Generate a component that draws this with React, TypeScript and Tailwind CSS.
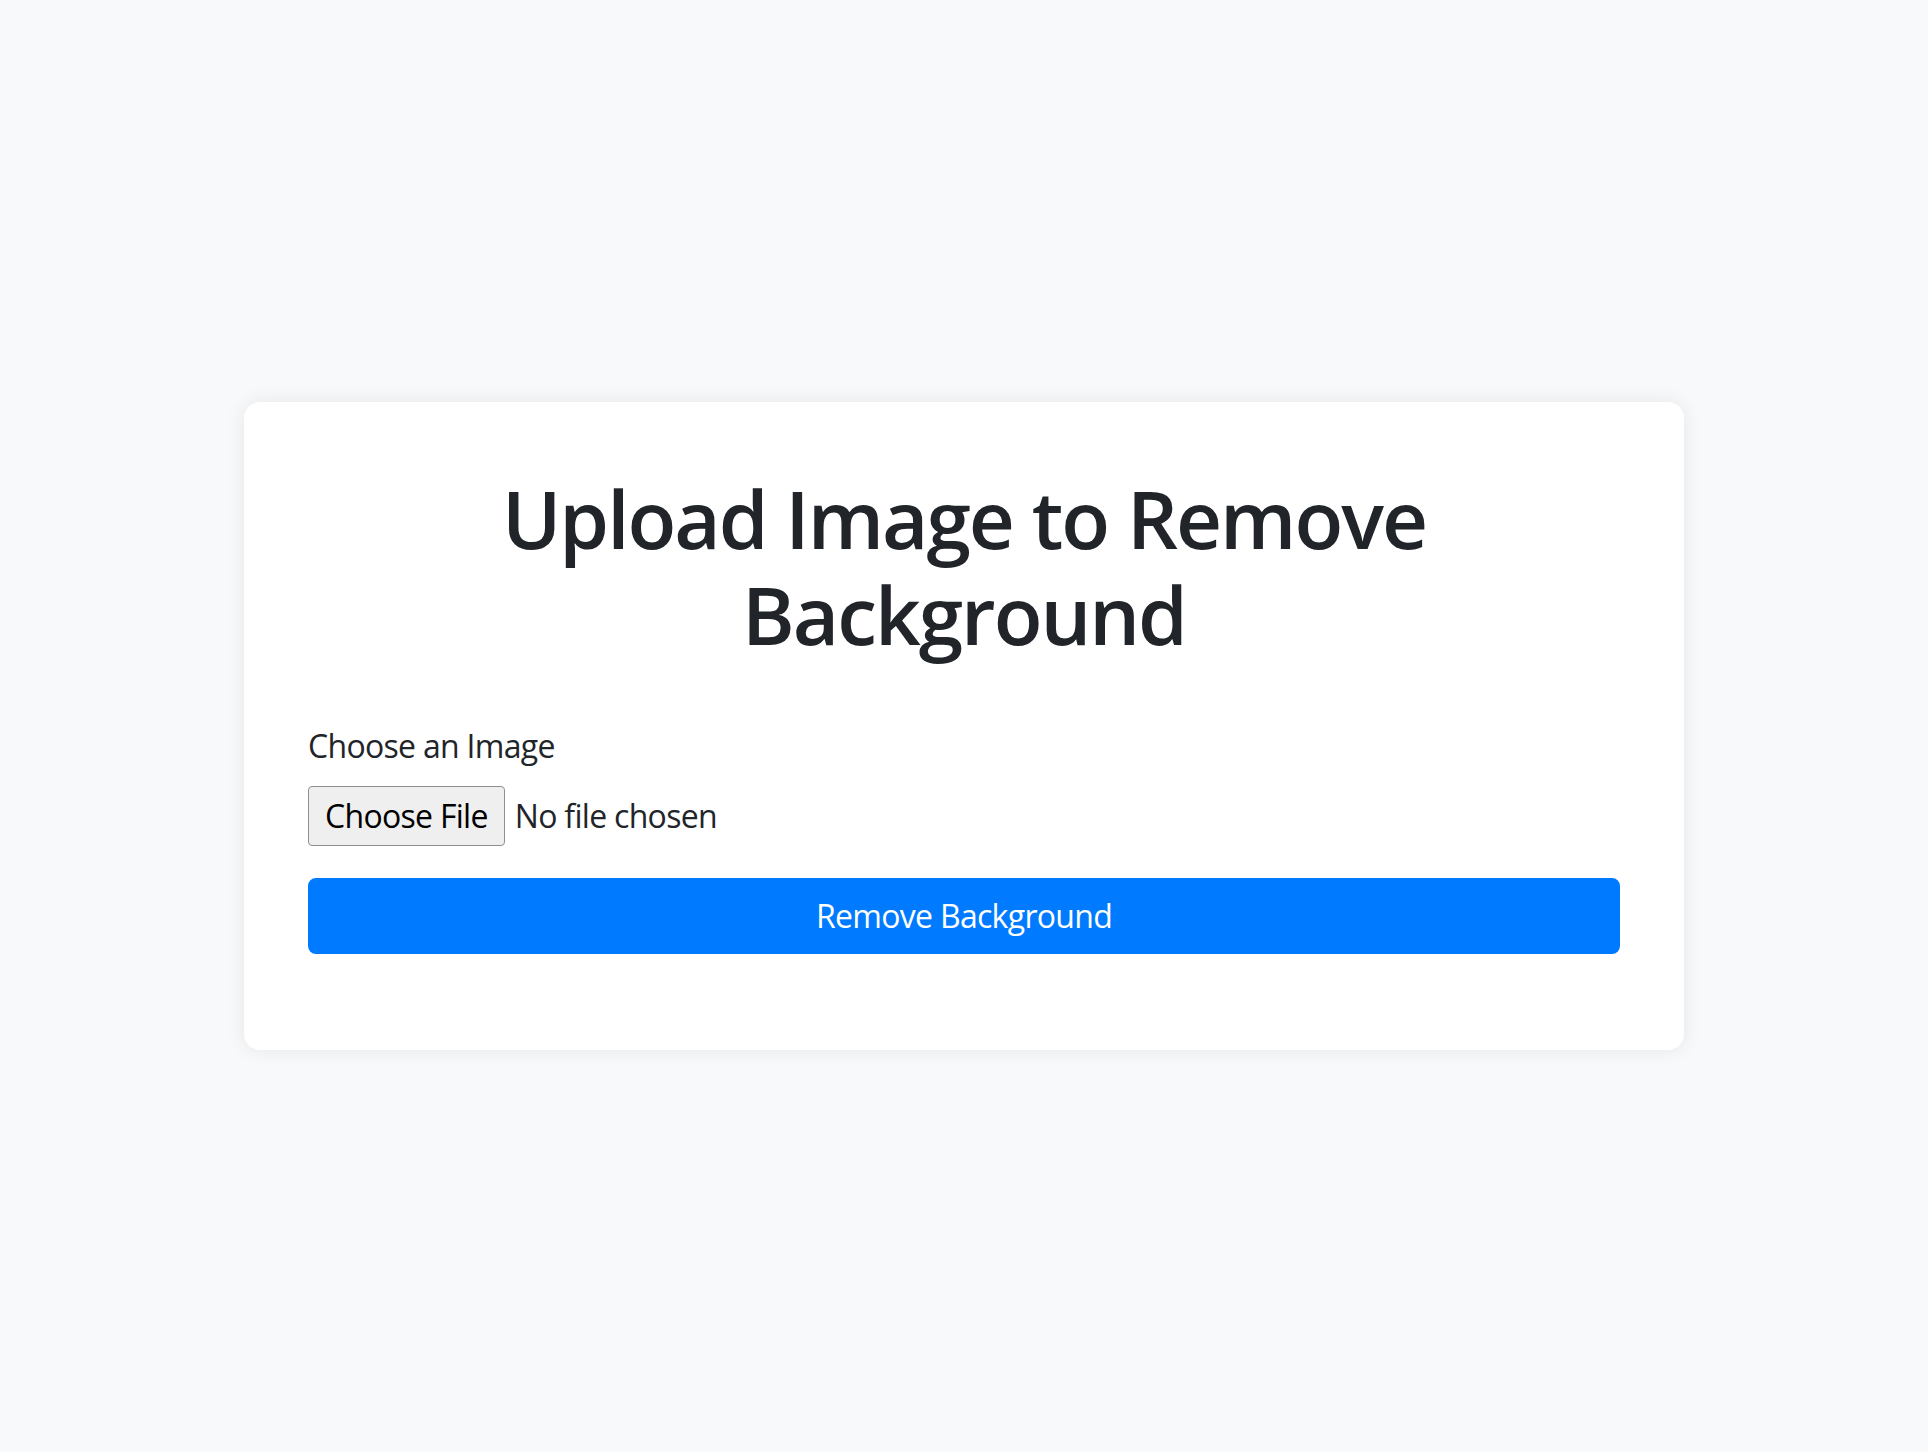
import React, { useState } from 'react';

export default function App() {
  const [fileName, setFileName] = useState<string | null>(null);

  return (
    <div className="min-h-screen flex items-center justify-center bg-[#f8f9fa] text-[#212529] font-['Open_Sans',sans-serif]">
      <div className="w-[1440px] bg-white rounded-[16px] shadow-[0_0_20px_rgba(0,0,0,0.08)] px-16 pt-[68px] pb-[96px]">
        <h1 className="text-center text-[80px] leading-[96px] font-semibold tracking-[-2px] mb-[60px]">
          Upload Image to Remove
          <br />
          Background
        </h1>

        <form onSubmit={(e) => e.preventDefault()}>
          <label className="block text-[32px] leading-[48px] tracking-[-0.7px] mb-4">Choose an Image</label>
          <label className="flex items-center h-[60px] mb-8 cursor-pointer">
            <span className="h-[60px] flex items-center px-4 bg-[#efefef] border border-[#8f8f8f] rounded-[4px] text-[32px] tracking-[-0.7px] text-black">
              Choose File
            </span>
            <span className="ml-[10px] text-[32px] tracking-[-0.7px]">{fileName || 'No file chosen'}</span>
            <input
              type="file"
              accept="image/*"
              className="hidden"
              onChange={(e) => setFileName(e.target.files?.[0]?.name || null)}
            />
          </label>
          <button
            type="submit"
            className="w-full h-[76px] bg-[#007bff] text-white text-[32px] tracking-[-0.7px] rounded-[8px] border-2 border-[#007bff]"
          >
            Remove Background
          </button>
        </form>
      </div>
    </div>
  );
}
